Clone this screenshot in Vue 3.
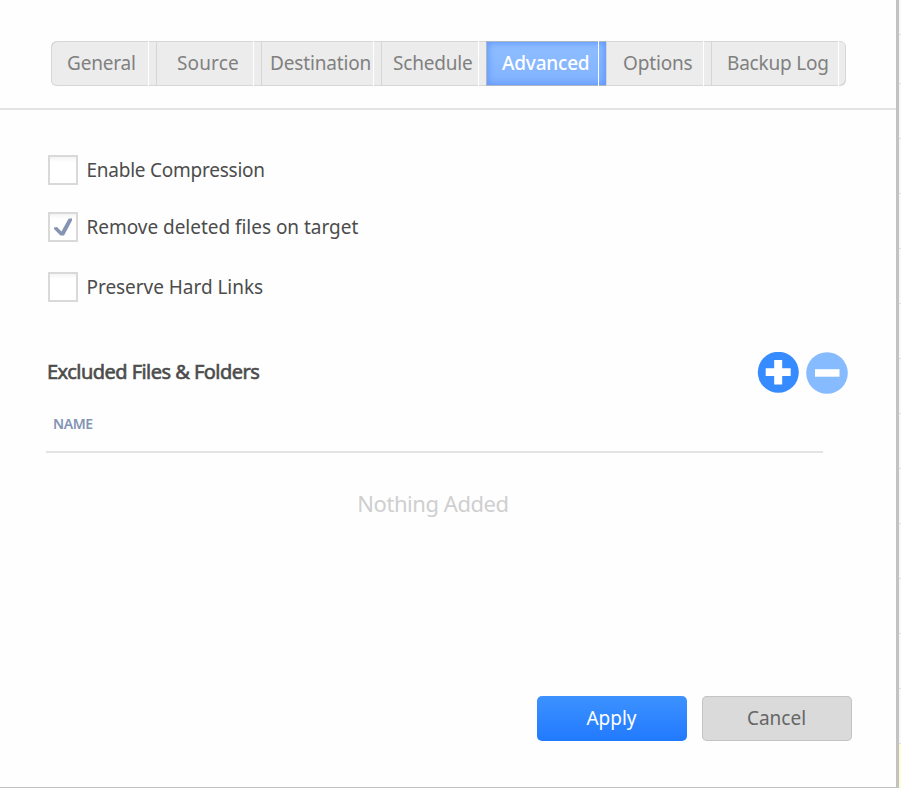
<script setup>
import { reactive } from 'vue'

const tabs = [
  { label: 'General', width: 105, inset: 16, tracking: -0.2 },
  { label: 'Source', width: 105, inset: 21, tracking: 0.15 },
  { label: 'Destination', width: 120, inset: 9, tracking: -0.15 },
  { label: 'Schedule', width: 105, inset: 12, tracking: -0.2 },
  { label: 'Advanced', width: 120, inset: 16, tracking: -0.2, active: true },
  { label: 'Options', width: 105, inset: 17, tracking: -0.15 },
  { label: 'Backup Log', width: 135, inset: 16, tracking: -0.2 },
]

const options = reactive([
  { label: 'Enable Compression', checked: false, tracking: -0.24 },
  { label: 'Remove deleted files on target', checked: true, tracking: -0.03 },
  { label: 'Preserve Hard Links', checked: false, tracking: -0.04 },
])
</script>

<template>
  <div class="screen">
    <main class="dialog">
      <nav class="tabs">
        <button
          v-for="tab in tabs"
          :key="tab.label"
          class="tab"
          :class="{ active: tab.active }"
          :style="{ width: tab.width + 'px', paddingLeft: tab.inset + 'px', letterSpacing: tab.tracking + 'px' }"
        >
          {{ tab.label }}
        </button>
      </nav>

      <section class="options">
        <div v-for="o in options" :key="o.label" class="option" @click="o.checked = !o.checked">
          <span class="box">
            <svg v-if="o.checked" width="26" height="26" viewBox="0 0 26 26">
              <path d="M4 13.5 L7 13 L11.5 17.5 L18.5 4.8 L22 4.2 L22 6.5 L14 21.5 L10.5 21.5 L4 15z" fill="#8594b3" />
            </svg>
          </span>
          <span class="option-label" :style="{ letterSpacing: o.tracking + 'px' }">{{ o.label }}</span>
        </div>
      </section>

      <header class="list-head">
        <h2>Excluded Files &amp; Folders</h2>
        <div class="tools">
          <svg width="42" height="42" viewBox="0 0 42 42">
            <circle cx="21.3" cy="20.3" r="20.5" fill="#368bff" />
            <path d="M17.2 8h8v8.2h8.500v7.800h-8.500v8.500h-8V24H8.700v-7.800h8.500z" fill="#fff" />
          </svg>
          <svg width="42" height="42" viewBox="0 0 42 42">
            <circle cx="21" cy="21" r="20.800" fill="#87bbff" />
            <path d="M9 17.200h24.500v7.500H9z" fill="#fff" />
          </svg>
        </div>
      </header>
      <div class="column">NAME</div>
      <p class="empty">Nothing Added</p>

      <footer class="actions">
        <button class="btn apply">Apply</button>
        <button class="btn cancel">Cancel</button>
      </footer>
    </main>
    <aside class="backdrop"></aside>
  </div>
</template>

<style>
body {
  background: #fff;
}
</style>

<style scoped>
.screen {
  width: 901px;
  height: 788px;
  display: flex;
  overflow: hidden;
  font-family: "Noto Sans", sans-serif;
  color: #4c4c4c;
}
.screen * {
  box-sizing: border-box;
}
.dialog {
  width: 899px;
  height: 788px;
  display: flex;
  flex-direction: column;
  border-right: 3px solid #c2c2c2;
  border-bottom: 1px solid #c2c2c2;
  background: #fefefe;
}
.backdrop {
  width: 2px;
  background:
    linear-gradient(#fffdd0, #fffdd0) 0 744px / 2px 44px no-repeat,
    linear-gradient(#e0e0e0, #e0e0e0) 0 34px / 2px 1px no-repeat,
    repeating-linear-gradient(transparent 0 28px, #e0e0e0 28px 29px, transparent 29px 55px) 0 55px / 2px 733px no-repeat,
    #f8f8f8;
}
.tabs {
  flex: none;
  display: flex;
  height: 110px;
  padding: 41px 0 0 51px;
  border-bottom: 2px solid #e3e3e3;
}
.tab {
  position: relative;
  flex: none;
  height: 45px;
  padding: 0;
  border: 0;
  text-align: left;
  white-space: nowrap;
  font: 19px/45px "Noto Sans", sans-serif;
  color: #808080;
  background: #ececec;
  box-shadow: inset 1px 1px #d6d6d6, inset 0 -1px #d6d6d6;
}
.tab::after {
  content: "";
  position: absolute;
  top: 0;
  bottom: 0;
  right: 7px;
  width: 1px;
  background: #fff;
}
.tab:first-child {
  border-radius: 6px 0 0 6px;
}
.tab:last-child {
  border-radius: 0 6px 6px 0;
  box-shadow: inset 1px 1px #d6d6d6, inset -1px -1px #d6d6d6;
}
.tab.active {
  color: #fff;
  font-weight: 500;
  background: linear-gradient(#90bfff, #80b1ff);
  box-shadow: inset 1px 1px #aeb6c2, inset 0 -1px #aeb6c2, inset 0 0 7px 2px #5f96ff;
}
.options {
  display: flex;
  flex-direction: column;
  padding: 45px 0 0 48px;
}
.option {
  display: flex;
  align-items: center;
  height: 30px;
  margin-bottom: 27px;
}
.option:nth-child(2) {
  margin-bottom: 30px;
}
.box {
  width: 30px;
  height: 30px;
  border: 2px solid #d9d9d9;
  background: linear-gradient(#f4f4f4, #fff 5px);
}
.box svg {
  display: block;
}
.option-label {
  margin-left: 8.5px;
  font-size: 19px;
  line-height: 30px;
  white-space: nowrap;
}
.list-head {
  display: flex;
  justify-content: space-between;
  align-items: center;
  height: 42px;
  margin: 23px 48px 0 47px;
}
h2 {
  margin: 0;
  padding-bottom: 2px;
  font-size: 20px;
  font-weight: 400;
  letter-spacing: -0.54px;
  line-height: 40px;
  -webkit-text-stroke: 0.6px currentColor;
}
.tools {
  display: flex;
  gap: 7px;
}
.column {
  width: 777px;
  height: 59px;
  margin-left: 46px;
  padding-left: 7px;
  border-bottom: 2px solid #e3e3e3;
  font-size: 14px;
  font-weight: 600;
  letter-spacing: -0.4px;
  line-height: 59px;
  color: #8294b3;
}
.empty {
  width: 866px;
  margin: 30px 0 0;
  text-align: center;
  font-size: 22px;
  letter-spacing: -0.45px;
  line-height: 40px;
  color: #cfcfcf;
}
.actions {
  display: flex;
  justify-content: flex-end;
  gap: 15px;
  margin: auto 44px 46px 0;
}
.btn {
  width: 150px;
  height: 45px;
  padding: 0 1px 0 0;
  border: 0;
  border-radius: 5px;
  font: 19px/45px "Noto Sans", sans-serif;
}
.apply {
  color: #fff;
  background: linear-gradient(#3d92ff, #217aff);
}
.cancel {
  color: #666;
  background: #dadada;
  box-shadow: inset 0 0 0 1px #c4c4c4;
}
</style>
